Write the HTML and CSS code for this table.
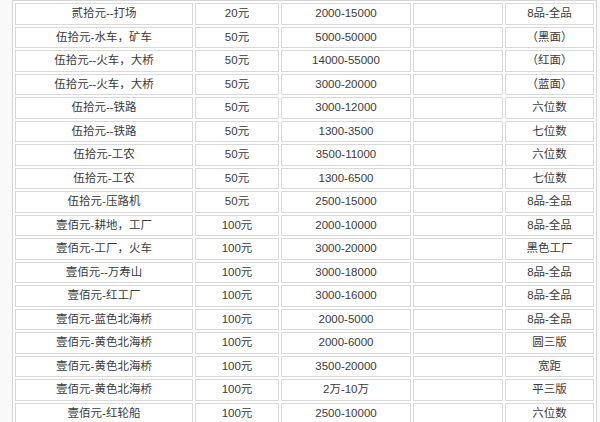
FILE: index.html
```html
<!DOCTYPE html>
<html lang="zh-CN">
<head>
<meta charset="utf-8">
<title>人民币价格表</title>
<link rel="stylesheet" href="styles.css">
</head>
<body>
<table class="price-table">
  <colgroup>
    <col class="c-name">
    <col class="c-face">
    <col class="c-price">
    <col class="c-blank">
    <col class="c-note">
  </colgroup>
  <tbody>
    <tr><td>贰拾元--打场</td><td>20元</td><td>2000-15000</td><td></td><td>8品-全品</td></tr>
    <tr><td>伍拾元-水车，矿车</td><td>50元</td><td>5000-50000</td><td></td><td>（黑面）</td></tr>
    <tr><td>伍拾元--火车，大桥</td><td>50元</td><td>14000-55000</td><td></td><td>（红面）</td></tr>
    <tr><td>伍拾元--火车，大桥</td><td>50元</td><td>3000-20000</td><td></td><td>（蓝面）</td></tr>
    <tr><td>伍拾元--铁路</td><td>50元</td><td>3000-12000</td><td></td><td>六位数</td></tr>
    <tr><td>伍拾元--铁路</td><td>50元</td><td>1300-3500</td><td></td><td>七位数</td></tr>
    <tr><td>伍拾元-工农</td><td>50元</td><td>3500-11000</td><td></td><td>六位数</td></tr>
    <tr><td>伍拾元-工农</td><td>50元</td><td>1300-6500</td><td></td><td>七位数</td></tr>
    <tr><td>伍拾元-压路机</td><td>50元</td><td>2500-15000</td><td></td><td>8品-全品</td></tr>
    <tr><td>壹佰元-耕地，工厂</td><td>100元</td><td>2000-10000</td><td></td><td>8品-全品</td></tr>
    <tr><td>壹佰元-工厂，火车</td><td>100元</td><td>3000-20000</td><td></td><td>黑色工厂</td></tr>
    <tr><td>壹佰元--万寿山</td><td>100元</td><td>3000-18000</td><td></td><td>8品-全品</td></tr>
    <tr><td>壹佰元-红工厂</td><td>100元</td><td>3000-16000</td><td></td><td>8品-全品</td></tr>
    <tr><td>壹佰元-蓝色北海桥</td><td>100元</td><td>2000-5000</td><td></td><td>8品-全品</td></tr>
    <tr><td>壹佰元-黄色北海桥</td><td>100元</td><td>2000-6000</td><td></td><td>圆三版</td></tr>
    <tr><td>壹佰元-黄色北海桥</td><td>100元</td><td>3500-20000</td><td></td><td>宽距</td></tr>
    <tr><td>壹佰元-黄色北海桥</td><td>100元</td><td>2万-10万</td><td></td><td>平三版</td></tr>
    <tr><td>壹佰元-红轮船</td><td>100元</td><td>2500-10000</td><td></td><td>六位数</td></tr>
  </tbody>
</table>
</body>
</html>
```
FILE: styles.css
```css
html, body {
  margin: 0;
  padding: 0;
  background: #f9f9f9;
  overflow: hidden;
}

.price-table {
  margin: 0 0 0 12px;
  width: 585px;
  table-layout: fixed;
  border-collapse: separate;
  border-spacing: 2px;
  border: 1px solid #d6d6d6;
  background: #fff;
  font-family: "Liberation Sans", "Noto Sans CJK SC", sans-serif;
  font-size: 11.5px;
  color: #3a3a3a;
}

.c-name { width: 178px; }
.c-face { width: 84px; }
.c-price { width: 130px; }
.c-blank { width: 90px; }
.c-note { width: 89px; }

.price-table td {
  box-sizing: border-box;
  height: 21.5px;
  padding: 0;
  border: 1px solid #d9d9d9;
  text-align: center;
  vertical-align: middle;
  line-height: 19px;
  white-space: nowrap;
}
```
